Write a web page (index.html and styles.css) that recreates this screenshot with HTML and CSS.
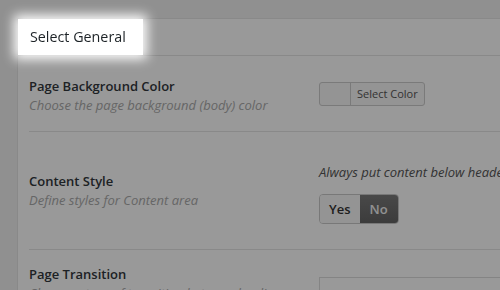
FILE: index.html
```html
<!DOCTYPE html>
<html>
<head>
<meta charset="utf-8">
<link rel="stylesheet" href="styles.css">
</head>
<body>
<div class="wrap">
  <div class="panel">
    <div class="panel-head">
      <h3 class="head-title highlight">Select General</h3>
    </div>
    <div class="rows">
      <div class="row row-color">
        <div class="label-col">
          <div class="label">Page Background Color</div>
          <div class="desc">Choose the page background (body) color</div>
        </div>
        <div class="field-col">
          <div class="color-btn"><span class="swatch"></span><span class="color-text">Select Color</span></div>
        </div>
      </div>
      <div class="row row-style">
        <div class="label-col">
          <div class="label">Content Style</div>
          <div class="desc">Define styles for Content area</div>
        </div>
        <div class="field-col">
          <div class="field-desc">Always put content below header</div>
          <div class="toggle"><span class="seg">Yes</span><span class="seg seg-on">No</span></div>
        </div>
      </div>
      <div class="row row-trans">
        <div class="label-col">
          <div class="label">Page Transition</div>
          <div class="desc">Choose a type of transition between loading pages</div>
        </div>
        <div class="field-col">
          <div class="select-box"></div>
        </div>
      </div>
    </div>
  </div>
</div>
<div class="overlay"></div>
</body>
</html>
```

FILE: styles.css
```css
html, body {
  margin: 0;
  padding: 0;
  overflow: hidden;
  height: 100%;
}
body {
  background: #f1f1f1;
  font-family: "Open Sans", "Liberation Sans", sans-serif;
  color: #32373c;
}
.wrap {
  padding: 18px 0 0 17px;
}
.panel {
  width: 700px;
  background: #fff;
  border: 1px solid #e5e5e5;
}
.panel-head {
  display: flex;
  border-bottom: 1px solid #e5e5e5;
}
.head-title {
  margin: 0;
  padding: 8px 17px 8px 12px;
  font-size: 14.3px;
  font-weight: 400;
  line-height: 20px;
  color: #1d2327;
}
.highlight {
  position: relative;
  z-index: 10;
  background: #fff;
  box-shadow: 0 0 11px 4px #fff;
}
.rows {
  margin-left: 11px;
}
.row {
  display: flex;
  align-items: flex-start;
  border-bottom: 1px solid #e5e5e5;
}
.label-col {
  width: 290px;
  flex: none;
}
.label {
  font-size: 13px;
  font-weight: 600;
  line-height: 19px;
  color: #32373c;
}
.desc {
  font-size: 13px;
  font-style: italic;
  line-height: 19px;
  color: #aaa;
  white-space: nowrap;
}
.field-col {
  flex: 1;
}
.row-color {
  padding: 21px 0 16px;
}
.row-color .field-col {
  padding-top: 5px;
}
.row-style {
  padding: 30px 0 25px;
}
.row-style .label-col {
  padding-top: 10px;
}
.row-trans {
  padding: 15px 0 20px;
  border-bottom: none;
}
.row-trans .field-col {
  padding-top: 12px;
}
.color-btn {
  display: inline-flex;
  border: 1px solid #ccc;
  border-radius: 3px;
  background: #f7f7f7;
  height: 22px;
}
.swatch {
  width: 30px;
  border-right: 1px solid #ccc;
}
.color-text {
  font-size: 11px;
  line-height: 22px;
  padding: 0 6px 0 6px;
  color: #555;
}
.field-desc {
  font-size: 13px;
  font-style: italic;
  line-height: 20px;
  color: #555;
  white-space: nowrap;
}
.toggle {
  display: inline-flex;
  margin-top: 12px;
  border: 1px solid #c8c8c8;
  border-radius: 4px;
  overflow: hidden;
}
.seg {
  font-size: 13px;
  font-weight: 600;
  line-height: 28px;
  padding: 0 9px;
  color: #333;
  background: #f7f7f7;
}
.seg-on {
  padding: 0 10px;
  color: #f2f2f2;
  background: linear-gradient(#7a7a7a, #646464);
}
.select-box {
  height: 28px;
  width: 400px;
  border: 1px solid #ddd;
  background: #fff;
}
.overlay {
  position: fixed;
  inset: 0;
  background: rgba(0, 0, 0, 0.4);
  z-index: 5;
}
```
